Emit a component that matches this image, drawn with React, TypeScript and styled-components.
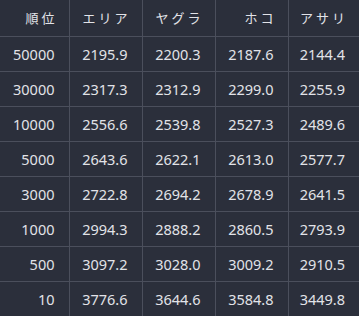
import React from 'react';
import styled, { createGlobalStyle } from 'styled-components';

const GlobalStyle = createGlobalStyle`
  html, body {
    margin: 0;
    padding: 0;
    background: #2b2f3b;
  }
`;

const Table = styled.table`
  border-collapse: collapse;
  table-layout: fixed;
  width: 359px;
  background: #2b2f3b;
  color: #e2e3e8;
  font-family: "Noto Sans", "Noto Sans CJK JP", sans-serif;
`;

const Col = styled.col<{ $w: number; }>`
  width: ${({ $w, }) => $w}px;
`;

const HeadCell = styled.th`
  height: 36px;
  padding: 0 11px 0 0;
  text-align: right;
  font-size: 13px;
  font-weight: 400;
  letter-spacing: 3px;
  border-bottom: 1px solid #4b4f5c;
  border-right: 1px solid #4b4f5c;
  box-sizing: border-box;

  &:last-child {
    border-right: none;
  }
`;

const Cell = styled.td`
  height: 35px;
  padding: 0 14px 0 0;
  text-align: right;
  font-size: 14.5px;
  border-bottom: 1px solid #4b4f5c;
  border-right: 1px solid #4b4f5c;
  box-sizing: border-box;

  &:last-child {
    border-right: none;
  }
`;

const headers = [ '順位', 'エリア', 'ヤグラ', 'ホコ', 'アサリ', ];

const rows = [
  [ '50000', '2195.9', '2200.3', '2187.6', '2144.4', ],
  [ '30000', '2317.3', '2312.9', '2299.0', '2255.9', ],
  [ '10000', '2556.6', '2539.8', '2527.3', '2489.6', ],
  [ '5000', '2643.6', '2622.1', '2613.0', '2577.7', ],
  [ '3000', '2722.8', '2694.2', '2678.9', '2641.5', ],
  [ '1000', '2994.3', '2888.2', '2860.5', '2793.9', ],
  [ '500', '3097.2', '3028.0', '3009.2', '2910.5', ],
  [ '10', '3776.6', '3644.6', '3584.8', '3449.8', ],
];

const widths = [ 69, 73, 73, 73, 71, ];

export default function App() {
  return (
    <>
      <GlobalStyle />
      <Table>
        <colgroup>
          {widths.map((w, i) => <Col key={i} $w={w} />)}
        </colgroup>
        <thead>
          <tr>
            {headers.map((h) => <HeadCell key={h}>{h}</HeadCell>)}
          </tr>
        </thead>
        <tbody>
          {rows.map((r) => (
            <tr key={r[0]}>
              {r.map((v, i) => <Cell key={i}>{v}</Cell>)}
            </tr>
          ))}
        </tbody>
      </Table>
    </>
  );
}
